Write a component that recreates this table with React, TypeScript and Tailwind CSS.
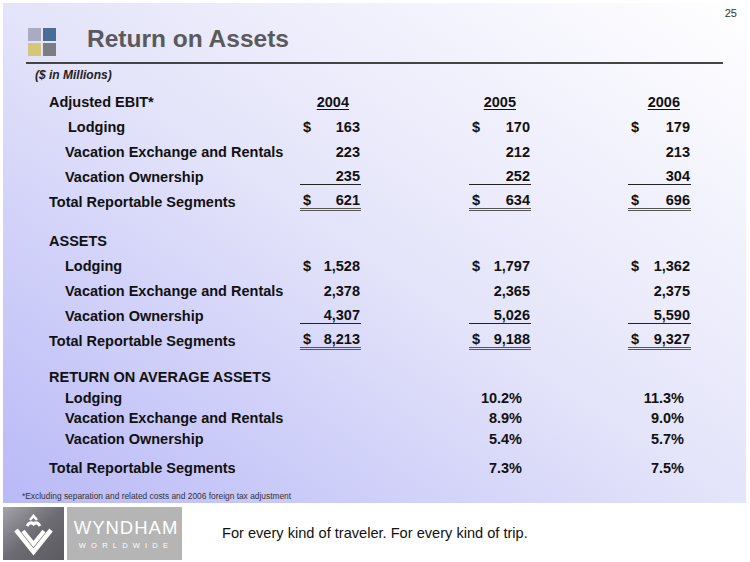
import { FC, ReactNode } from 'react';

type Cell = { dollar?: boolean; value: string; line?: 'single' | 'double' };

const font = { fontFamily: '"Liberation Sans", Arial, sans-serif' };

const NumCell: FC<{ cell?: Cell; width: string }> = ({ cell, width }) => (
  <div className={`${width} flex h-full items-center`}>
    {cell && (
      <div
        className={`flex w-full justify-between ${
          cell.line === 'single'
            ? 'border-b border-[#222]'
            : cell.line === 'double'
            ? 'border-b-[3px] border-double border-[#555]'
            : ''
        }`}>
        <span className="pl-[3px]">{cell.dollar ? '$' : ''}</span>
        <span className="pr-[1px]">{cell.value}</span>
      </div>
    )}
  </div>
);

const Row: FC<{ label: ReactNode; indent?: string; cells?: Cell[] }> = ({ label, indent = '', cells }) => (
  <div className="flex h-[25px] items-center">
    <div className={`w-[251px] ${indent}`}>{label}</div>
    <NumCell cell={cells?.[0]} width="w-[61px]" />
    <div className="w-[108px]" />
    <NumCell cell={cells?.[1]} width="w-[62px]" />
    <div className="w-[97px]" />
    <NumCell cell={cells?.[2]} width="w-[63px]" />
  </div>
);

const PctRow: FC<{ label: string; a: string; b: string; indent?: boolean }> = ({ label, a, b, indent }) => (
  <div className="flex h-[20.5px] items-center">
    <div className={`w-[251px] ${indent ? 'pl-[16px]' : ''}`}>{label}</div>
    <div className="w-[61px]" />
    <div className="w-[108px]" />
    <div className="w-[62px] pr-[9px] text-right">{a}</div>
    <div className="w-[97px]" />
    <div className="w-[63px] pr-[7px] text-right">{b}</div>
  </div>
);

const WyndhamMark: FC = () => (
  <svg viewBox="0 0 61 53" className="h-[53px] w-[61px]">
    <g fill="none" stroke="#ffffff" strokeLinejoin="miter">
      <path d="M13 23 L30.5 45 L48 23" strokeWidth="4.5" />
      <path d="M20 24 L30.5 37 L41 24" strokeWidth="4" />
      <path d="M24 19 Q27 14 30.5 17 Q34 14 37 19" strokeWidth="3" />
      <path d="M27 13 L30.5 9 L34 13" strokeWidth="2.5" />
    </g>
  </svg>
);

const App: FC = () => {
  return (
    <div className="relative h-[562px] w-[750px] overflow-hidden bg-white text-[#111]" style={font}>
      <div className="absolute right-[13px] top-[5px] text-[11px] text-[#333]">25</div>

      <div className="mx-[3px] mt-[3px] h-[500px] w-[743px] bg-linear-to-tr from-[#b9b9f7] via-[#e4e4fa] to-white">
        <div className="flex items-start pl-[25px] pt-[25px]">
          <div className="grid w-[28px] grid-cols-2 gap-[2px]">
            <div className="h-[13px] bg-[#a9aac4]" />
            <div className="h-[13px] bg-[#4a6d95]" />
            <div className="h-[13px] bg-[#d6c67a]" />
            <div className="h-[13px] bg-[#7b7c84]" />
          </div>
          <div className="ml-[31px] -mt-[4px] text-[24.5px] font-bold leading-[30px] text-[#5a5a5c]">
            Return on Assets
          </div>
        </div>
        <div className="ml-[23px] mt-[6px] h-[2px] w-[697px] bg-[#444]" />
        <div className="ml-[32px] mt-[3px] text-[12px] font-bold italic leading-[16px] text-[#222]">
          ($ in Millions)
        </div>

        <div className="mt-[6px] pl-[46px] text-[14.5px] font-bold leading-[16px]">
          <div className="flex h-[25px] items-center">
            <div className="w-[251px]">Adjusted EBIT*</div>
            <div className="w-[61px] pr-[12px] text-right">
              <span className="underline underline-offset-2">2004</span>
            </div>
            <div className="w-[108px]" />
            <div className="w-[62px] pr-[15px] text-right">
              <span className="underline underline-offset-2">2005</span>
            </div>
            <div className="w-[97px]" />
            <div className="w-[63px] pr-[11px] text-right">
              <span className="underline underline-offset-2">2006</span>
            </div>
          </div>
          <Row
            label="Lodging"
            indent="pl-[19px]"
            cells={[
              { dollar: true, value: '163' },
              { dollar: true, value: '170' },
              { dollar: true, value: '179' },
            ]}
          />
          <Row
            label="Vacation Exchange and Rentals"
            indent="pl-[16px]"
            cells={[{ value: '223' }, { value: '212' }, { value: '213' }]}
          />
          <Row
            label="Vacation Ownership"
            indent="pl-[16px]"
            cells={[
              { value: '235', line: 'single' },
              { value: '252', line: 'single' },
              { value: '304', line: 'single' },
            ]}
          />
          <Row
            label="Total Reportable Segments"
            cells={[
              { dollar: true, value: '621', line: 'double' },
              { dollar: true, value: '634', line: 'double' },
              { dollar: true, value: '696', line: 'double' },
            ]}
          />

          <div className="mt-[14px]">
            <Row label="ASSETS" />
            <Row
              label="Lodging"
              indent="pl-[16px]"
              cells={[
                { dollar: true, value: '1,528' },
                { dollar: true, value: '1,797' },
                { dollar: true, value: '1,362' },
              ]}
            />
            <Row
              label="Vacation Exchange and Rentals"
              indent="pl-[16px]"
              cells={[{ value: '2,378' }, { value: '2,365' }, { value: '2,375' }]}
            />
            <Row
              label="Vacation Ownership"
              indent="pl-[16px]"
              cells={[
                { value: '4,307', line: 'single' },
                { value: '5,026', line: 'single' },
                { value: '5,590', line: 'single' },
              ]}
            />
            <Row
              label="Total Reportable Segments"
              cells={[
                { dollar: true, value: '8,213', line: 'double' },
                { dollar: true, value: '9,188', line: 'double' },
                { dollar: true, value: '9,327', line: 'double' },
              ]}
            />
          </div>

          <div className="mt-[14px]">
            <PctRow label="RETURN ON AVERAGE ASSETS" a="" b="" />
            <PctRow label="Lodging" indent a="10.2%" b="11.3%" />
            <PctRow label="Vacation Exchange and Rentals" indent a="8.9%" b="9.0%" />
            <PctRow label="Vacation Ownership" indent a="5.4%" b="5.7%" />
            <div className="mt-[9px]">
              <PctRow label="Total Reportable Segments" a="7.3%" b="7.5%" />
            </div>
          </div>
        </div>

        <div className="ml-[19px] mt-[11px] text-[8.4px] leading-[12px] text-[#333]">
          *Excluding separation and related costs and 2006 foreign tax adjustment
        </div>
      </div>

      <div className="mt-[4px] flex items-center">
        <div className="ml-[3px] flex h-[53px] w-[61px] bg-linear-to-br from-[#a4a4aa] via-[#6c6c72] to-[#5a5a60]">
          <WyndhamMark />
        </div>
        <div className="ml-[3px] flex h-[53px] w-[115px] flex-col items-center justify-center bg-[#b5b5b5] pl-[3px] text-white">
          <div className="text-[18.5px] leading-[20px] tracking-[1px]">WYNDHAM</div>
          <div className="mt-[3px] text-[7.5px] leading-[9px] tracking-[5.2px]">WORLDWIDE</div>
        </div>
        <div className="ml-[40px] text-[14.6px] text-[#111]">
          For every kind of traveler. For every kind of trip.
        </div>
      </div>
    </div>
  );
};

export default App;
